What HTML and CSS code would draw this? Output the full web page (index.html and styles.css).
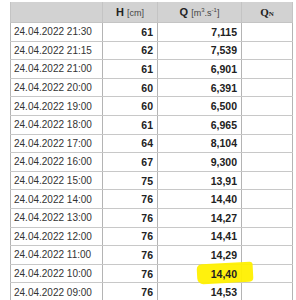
FILE: index.html
```html
<!DOCTYPE html>
<html>
	<head>
		<meta charset="utf-8" />
		<title>Průtoky</title>
		<link rel="stylesheet" href="styles.css">
	</head>
	<body>
		<div class="wrap">
			<table class="flow">
				<colgroup>
					<col class="c-date" />
					<col class="c-h" />
					<col class="c-q" />
					<col class="c-qn" />
				</colgroup>
				<thead>
					<tr>
						<th></th>
						<th><b>H</b> <span class="unit">[cm]</span></th>
						<th><b>Q</b> <span class="unit">[m<sup>3</sup>.s<sup>-1</sup>]</span></th>
						<th class="qn">Q<span class="sub">N</span></th>
					</tr>
				</thead>
				<tbody>
					<tr><td>24.04.2022 21:30</td><td class="num">61</td><td class="num">7,115</td><td></td></tr>
					<tr><td>24.04.2022 21:15</td><td class="num">62</td><td class="num">7,539</td><td></td></tr>
					<tr><td>24.04.2022 21:00</td><td class="num">61</td><td class="num">6,901</td><td></td></tr>
					<tr><td>24.04.2022 20:00</td><td class="num">60</td><td class="num">6,391</td><td></td></tr>
					<tr><td>24.04.2022 19:00</td><td class="num">60</td><td class="num">6,500</td><td></td></tr>
					<tr><td>24.04.2022 18:00</td><td class="num">61</td><td class="num">6,965</td><td></td></tr>
					<tr><td>24.04.2022 17:00</td><td class="num">64</td><td class="num">8,104</td><td></td></tr>
					<tr><td>24.04.2022 16:00</td><td class="num">67</td><td class="num">9,300</td><td></td></tr>
					<tr><td>24.04.2022 15:00</td><td class="num">75</td><td class="num">13,91</td><td></td></tr>
					<tr><td>24.04.2022 14:00</td><td class="num">76</td><td class="num">14,40</td><td></td></tr>
					<tr><td>24.04.2022 13:00</td><td class="num">76</td><td class="num">14,27</td><td></td></tr>
					<tr><td>24.04.2022 12:00</td><td class="num">76</td><td class="num">14,41</td><td></td></tr>
					<tr><td>24.04.2022 11:00</td><td class="num">76</td><td class="num">14,29</td><td></td></tr>
					<tr><td>24.04.2022 10:00</td><td class="num">76</td><td class="num marked"><span class="marker"></span><span class="val">14,40</span></td><td></td></tr>
					<tr><td>24.04.2022 09:00</td><td class="num">76</td><td class="num">14,53</td><td></td></tr>
				</tbody>
			</table>
		</div>
	</body>
</html>
```

FILE: styles.css
```css
body {
	margin: 0;
	background: #fff;
	font-family: "Liberation Sans", Arial, sans-serif;
	color: #333;
}

.wrap {
	padding: 2px 0 0 10px;
}

.flow {
	border-collapse: collapse;
	table-layout: fixed;
	width: 282px;
	font-size: 10px;
}

.c-date { width: 92px; }
.c-h { width: 55px; }
.c-q { width: 84px; }
.c-qn { width: 51px; }

.flow th {
	height: 20px;
	padding: 0;
	background: #d2d2d2;
	border: 1px solid #c4c4c4;
	border-top: none;
	font-weight: normal;
	font-size: 11px;
	color: #222;
	text-align: center;
}

.flow th .unit {
	font-size: 9px;
	color: #444;
}

.flow th sup {
	font-size: 6px;
	vertical-align: 4px;
}

.flow th.qn {
	font-family: "Liberation Serif", serif;
	font-weight: bold;
	font-size: 11px;
}

.flow th.qn .sub {
	font-size: 7px;
}

.flow td {
	height: 17.6px;
	padding: 0 4px 0 3px;
	border: 1px solid #c8c8c8;
	border-left-color: #b4b4b4;
	border-right-color: #b4b4b4;
	white-space: nowrap;
}

.flow td.num {
	text-align: right;
	font-weight: bold;
	font-size: 10.5px;
	color: #222;
}

/* Highlighter stroke */
.marked {
	position: relative;
}

.marker {
	position: absolute;
	left: 39px;
	top: -2px;
	width: 56px;
	height: 20px;
	background: #fff000;
	border-radius: 5px 3px 4px 6px;
	transform: rotate(-3deg);
	opacity: 0.95;
}

.marked .val {
	position: relative;
}
```
